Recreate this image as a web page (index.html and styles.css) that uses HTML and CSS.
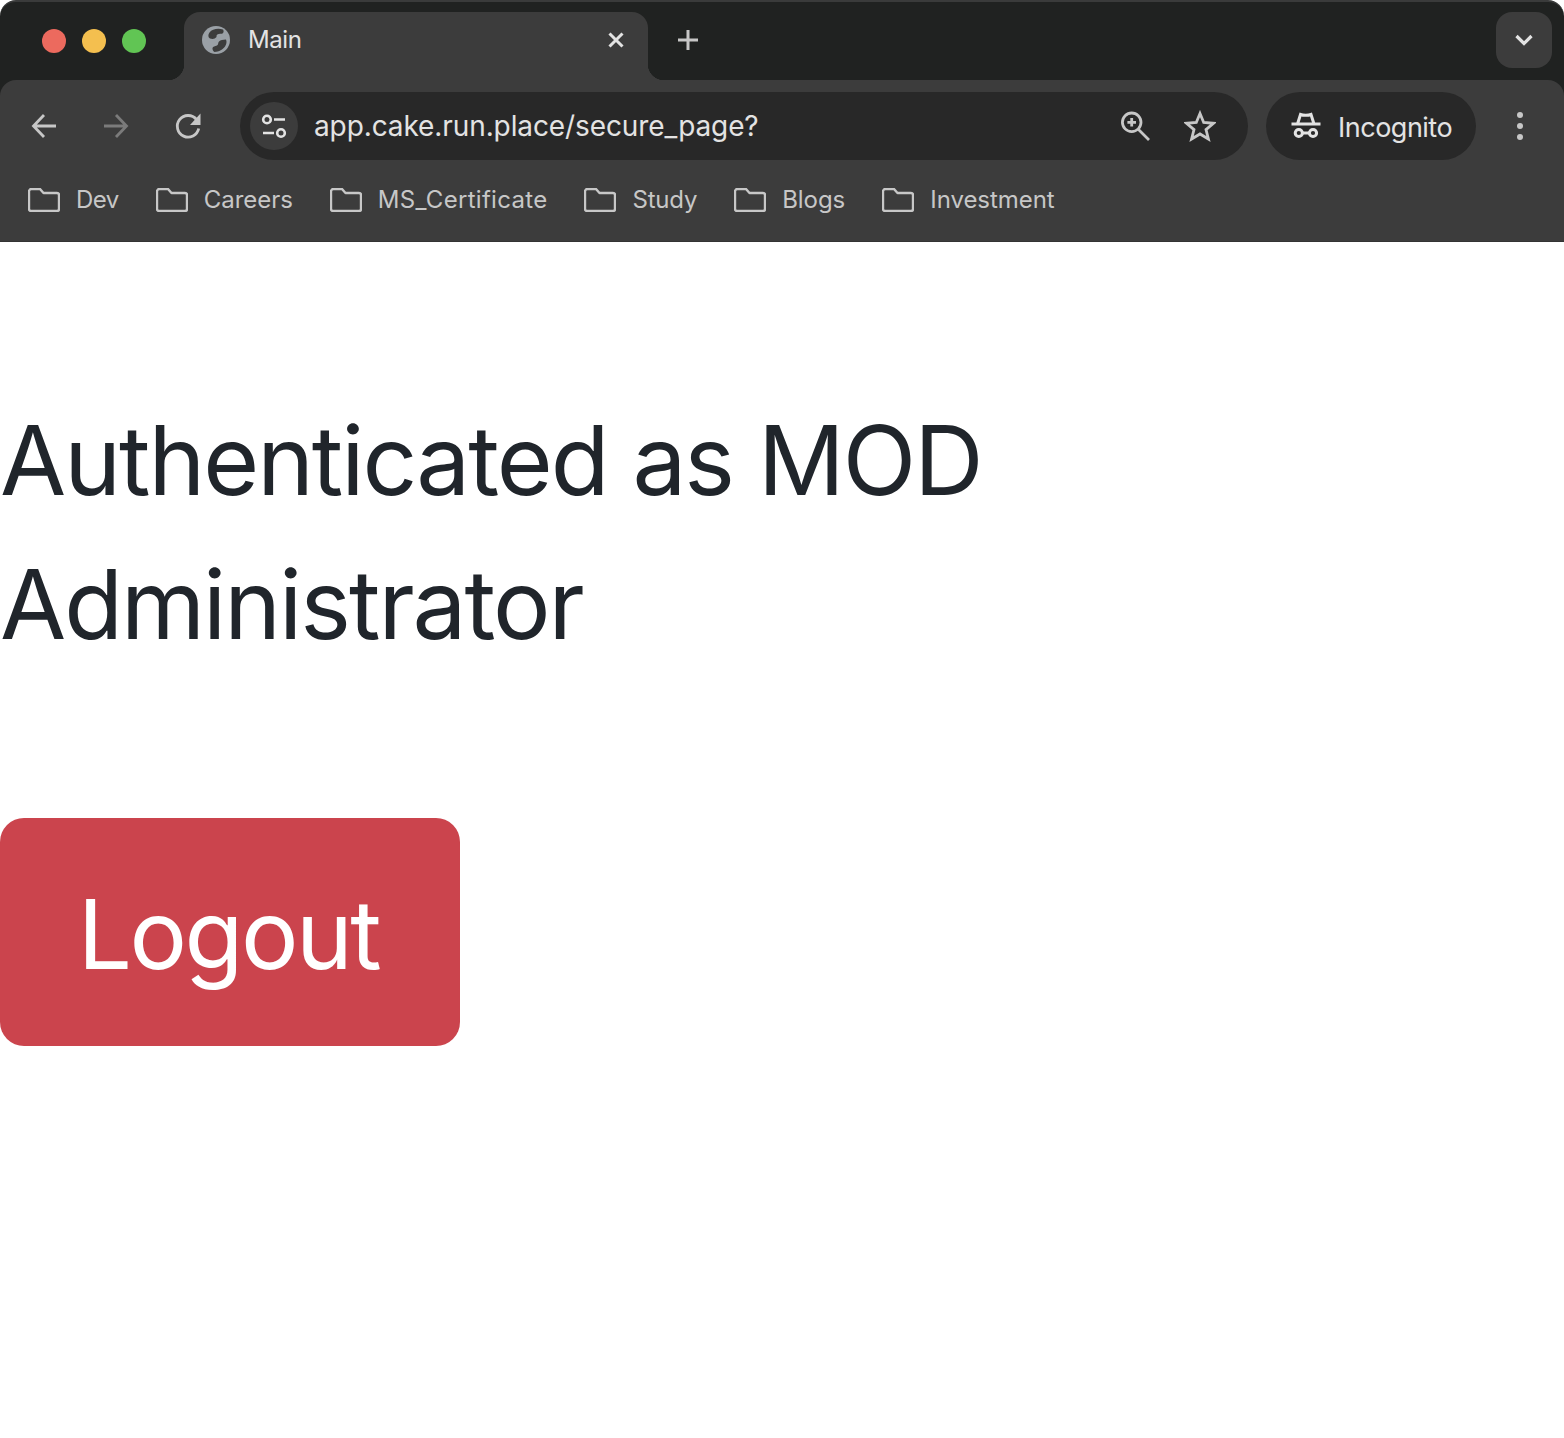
FILE: index.html
```html
<!DOCTYPE html>
<html lang="en">
<head>
<meta charset="utf-8">
<title>Main</title>
<link rel="stylesheet" href="styles.css">
</head>
<body>
<header class="browser">
  <div class="tabstrip">
    <div class="lights">
      <span class="light red"></span>
      <span class="light yellow"></span>
      <span class="light green"></span>
    </div>
    <div class="tab">
      <svg class="globe" viewBox="0 0 28 28"><circle cx="14" cy="14" r="14" fill="#9aa0a6"/><path d="M21 3.500C16 2 10 3 7.500 6.500C5.800 9 6 11.500 8 12.500C10.500 13.500 13 13 14.500 11C14 8.500 16.500 7.500 19 7.800C21 8 22.500 6 21 3.500Z" fill="#3c3c3c"/><path d="M24 13.500C21 13.800 18.500 14 17 15.500C15.800 17 16.500 18.500 15 19.500C13 20.500 11 20 10.500 22C10.300 23.500 11 25 12.500 26C17 25.800 21 23.500 23 20.500C24.500 18.500 25 15.500 24 13.500Z" fill="#3c3c3c"/></svg>
      <span class="tab-title">Main</span>
      <svg class="tab-close" viewBox="0 0 16 16"><path d="M1.500 1.500L14.500 14.500M14.500 1.500L1.500 14.500" /></svg>
    </div>
    <svg class="new-tab" viewBox="0 0 20 20"><path d="M10 0V20M0 10H20"/></svg>
    <div class="tab-search"><svg viewBox="0 0 20 12"><path d="M2.500 2L10 9.500L17.500 2"/></svg></div>
  </div>
  <div class="toolbar">
    <div class="nav">
      <svg class="icon" viewBox="0 0 32 32"><path d="M28 16H6M16 5L5.500 16L16 27"/></svg>
      <svg class="icon dim" viewBox="0 0 32 32"><path d="M4 16H26M16 5L26.500 16L16 27"/></svg>
      <svg class="icon" viewBox="0 0 32 32"><path d="M26.700 18.500A10.800 10.800 0 1 1 24.500 9.500"/><path class="solid" d="M28.500 3.500V15H18Z"/></svg>
    </div>
    <div class="omnibox">
      <div class="site-chip">
        <svg viewBox="0 0 32 32"><circle cx="9" cy="9.500" r="3.800"/><path d="M16 9.500H27M5 23H16"/><circle cx="23" cy="23" r="3.800"/></svg>
      </div>
      <span class="url">app.cake.run.place/secure_page?</span>
      <svg class="icon zoom-icon" viewBox="0 0 32 32"><circle cx="11.700" cy="12.300" r="9.300"/><path d="M18.500 19.500L29 30M11.700 8V16.600M7.400 12.300H16"/></svg>
      <svg class="icon star" viewBox="0 0 32 32"><path d="M16 3.500L19.700 12.500L29.500 13.300L22 19.600L24.400 29L16 24L7.600 29L10 19.600L2.500 13.300L12.300 12.500Z"/></svg>
    </div>
    <div class="incognito">
      <svg viewBox="0 0 30 28"><path d="M0.500 12H29.500M6.500 12L9.500 2.500C12 3.500 17.500 3.500 20 2.500L23 12"/><circle cx="7.800" cy="21" r="3.600"/><circle cx="22" cy="21" r="3.600"/><path d="M11 21H18.500"/></svg>
      <span class="incognito-label">Incognito</span>
    </div>
    <div class="menu"><span></span><span></span><span></span></div>
  </div>
  <nav class="bookmarks">
    <a class="bookmark tighter"><svg viewBox="0 0 32 24"><path d="M1 3.500A2.500 2.500 0 0 1 3.500 1H12L15.500 5H29A2 2 0 0 1 31 7V21A2 2 0 0 1 29 23H3A2 2 0 0 1 1 21Z"/></svg>Dev</a>
    <a class="bookmark"><svg viewBox="0 0 32 24"><path d="M1 3.500A2.500 2.500 0 0 1 3.500 1H12L15.500 5H29A2 2 0 0 1 31 7V21A2 2 0 0 1 29 23H3A2 2 0 0 1 1 21Z"/></svg>Careers</a>
    <a class="bookmark wide"><svg viewBox="0 0 32 24"><path d="M1 3.500A2.500 2.500 0 0 1 3.500 1H12L15.500 5H29A2 2 0 0 1 31 7V21A2 2 0 0 1 29 23H3A2 2 0 0 1 1 21Z"/></svg>MS_Certificate</a>
    <a class="bookmark tight"><svg viewBox="0 0 32 24"><path d="M1 3.500A2.500 2.500 0 0 1 3.500 1H12L15.500 5H29A2 2 0 0 1 31 7V21A2 2 0 0 1 29 23H3A2 2 0 0 1 1 21Z"/></svg>Study</a>
    <a class="bookmark"><svg viewBox="0 0 32 24"><path d="M1 3.500A2.500 2.500 0 0 1 3.500 1H12L15.500 5H29A2 2 0 0 1 31 7V21A2 2 0 0 1 29 23H3A2 2 0 0 1 1 21Z"/></svg>Blogs</a>
    <a class="bookmark"><svg viewBox="0 0 32 24"><path d="M1 3.500A2.500 2.500 0 0 1 3.500 1H12L15.500 5H29A2 2 0 0 1 31 7V21A2 2 0 0 1 29 23H3A2 2 0 0 1 1 21Z"/></svg>Investment</a>
  </nav>
</header>
<main class="page">
  <h1 class="heading">Authenticated as MOD Administrator</h1>
  <button class="logout" type="button">Logout</button>
</main>
</body>
</html>
```
FILE: styles.css
```css
* { box-sizing: border-box; }
html, body { margin: 0; background: #fff; }
body { font-family: Inter, "Liberation Sans", sans-serif; }

.browser { background: #202221; border-radius: 16px 16px 0 0; border-top: 2px solid #3a3b3b; }

.tabstrip { display: flex; align-items: flex-end; height: 78px; position: relative; }
.lights { display: flex; gap: 16px; width: 184px; height: 78px; padding: 27px 0 0 42px; }
.light { width: 24px; height: 24px; border-radius: 50%; }
.red { background: #ec6a5e; }
.yellow { background: #f4bf4f; }
.green { background: #61c554; }

.tab { position: relative; width: 464px; height: 68px; background: #3c3c3c; border-radius: 16px 16px 0 0; display: flex; align-items: flex-start; padding: 14px 24px 0 18px; }
.tab::before, .tab::after { content: ""; position: absolute; bottom: 0; width: 16px; height: 16px; }
.tab::before { left: -16px; background: radial-gradient(circle at 0 0, transparent 16px, #3c3c3c 16.5px); }
.tab::after { right: -16px; background: radial-gradient(circle at 100% 0, transparent 16px, #3c3c3c 16.5px); }
.globe { width: 28px; height: 28px; margin-right: 18px; flex: none; }
.tab-title { font-size: 24px; line-height: 28px; letter-spacing: -0.4px; color: #e3e3e3; flex: 1; }
.tab-close { width: 16px; height: 16px; margin-top: 6px; fill: none; stroke: #e3e3e3; stroke-width: 3; }
.new-tab { width: 20px; height: 20px; margin: 0 0 30px 30px; fill: none; stroke: #c7c7c7; stroke-width: 3; }
.tab-search { width: 56px; height: 56px; margin: 0 12px 12px auto; background: #3c3c3c; border-radius: 16px; display: flex; align-items: center; justify-content: center; }
.tab-search svg { width: 20px; height: 12px; fill: none; stroke: #e3e3e3; stroke-width: 3.200; }

.toolbar { display: flex; align-items: center; height: 88px; padding: 12px 0 8px; background: #3c3c3c; border-radius: 16px 16px 0 0; position: relative; }
.nav { display: flex; gap: 40px; width: 240px; padding-left: 28px; flex: none; }
.icon { width: 32px; height: 32px; flex: none; fill: none; stroke: #c7c7c7; stroke-width: 2.800; }
.icon.dim { stroke: #7b7b7b; }
.icon .solid { fill: #c7c7c7; stroke: none; }
.omnibox { display: flex; align-items: center; width: 1008px; height: 68px; background: #282828; border-radius: 34px; padding: 0 32px 0 10px; flex: none; }
.site-chip { width: 48px; height: 48px; border-radius: 50%; background: #3c3c3c; display: flex; align-items: center; justify-content: center; flex: none; }
.site-chip svg { width: 32px; height: 32px; fill: none; stroke: #e3e3e3; stroke-width: 2.600; }
.url { margin-left: 16px; flex: 1; font-size: 28px; line-height: 34px; letter-spacing: -0.1px; color: #e3e3e3; white-space: nowrap; }
.zoom-icon { margin-right: 32px; }
.incognito { display: flex; align-items: center; height: 68px; width: 210px; margin-left: 18px; padding-left: 25px; background: #282828; border-radius: 34px; font-size: 27px; letter-spacing: -0.5px; color: #e3e3e3; flex: none; }
.incognito svg { width: 30px; height: 28px; margin-right: 17px; fill: none; stroke: #e3e3e3; stroke-width: 3; }
.incognito-label { padding-top: 2px; }
.menu { display: flex; flex-direction: column; gap: 5px; margin-left: 41px; }
.menu span { width: 6px; height: 6px; border-radius: 50%; background: #c7c7c7; }

.bookmarks { display: flex; align-items: center; gap: 37px; height: 74px; padding: 0 0 10px 28px; background: #3c3c3c; border-bottom: 1px solid #333; }
.bookmark { display: flex; align-items: center; gap: 16px; font-size: 24px; letter-spacing: -0.05px; color: #c7c7c7; }
.bookmark.tighter { letter-spacing: -0.5px; }
.bookmark.tight { letter-spacing: -0.2px; }
.bookmark.wide { letter-spacing: 0.3px; }
.bookmark svg { width: 32px; height: 24px; fill: none; stroke: #c7c7c7; stroke-width: 2.400; stroke-linejoin: round; }

.page { padding-top: 146px; }
.heading { margin: 0 0 142px; max-width: 1200px; font-size: 96px; font-weight: 400; line-height: 144px; letter-spacing: -2px; color: #20252b; }
.logout { display: block; width: 460px; height: 228px; padding: 4px 3px 0 0; border: 0; background: #cb444d; border-radius: 24px; font: 400 96px/144px Inter, "Liberation Sans", sans-serif; letter-spacing: -2.500px; color: #fff; }
```
